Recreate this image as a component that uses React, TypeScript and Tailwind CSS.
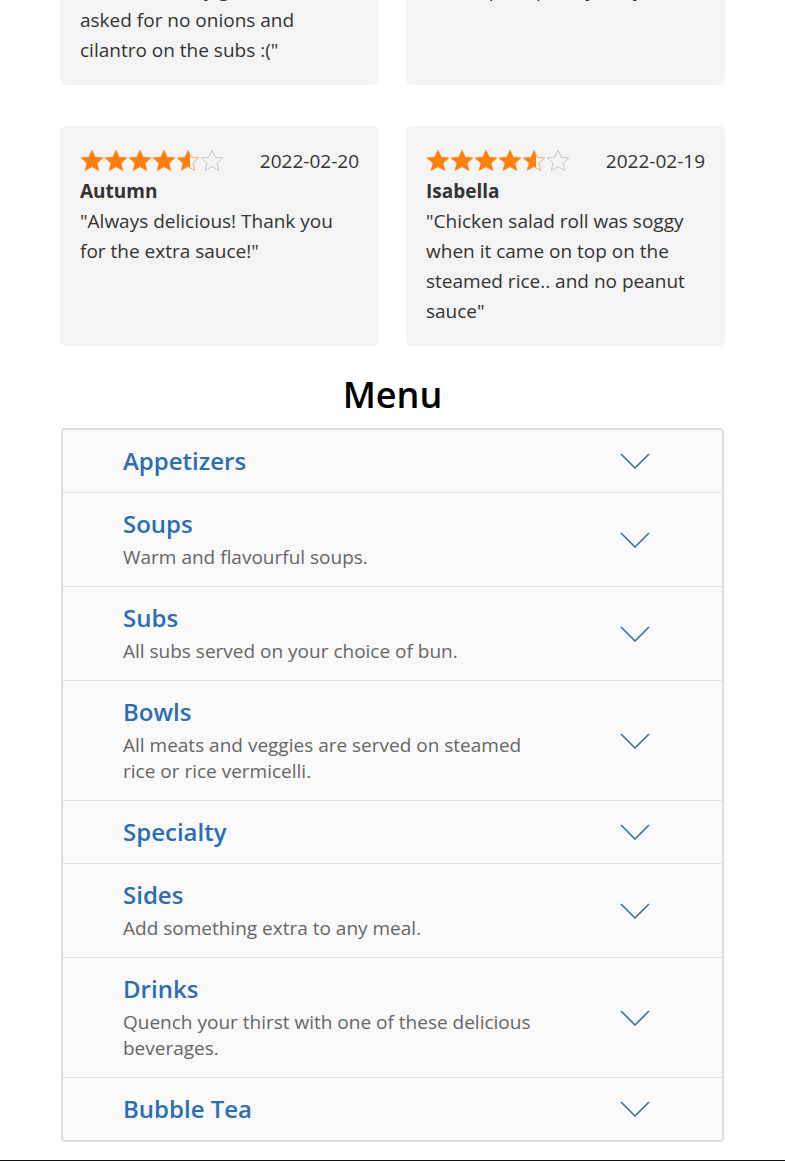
import React from "react";

const font = { fontFamily: '"Open Sans", "Noto Sans", sans-serif' };

function Star({ fill }: { fill: "full" | "half" | "empty" }) {
  const d =
    "M12 1.2l3.2 7 7.6.7-5.8 5.1 1.8 7.5L12 17.6l-6.8 3.9 1.8-7.5-5.8-5.1 7.6-.7z";
  const id = React.useId();
  return (
    <svg width="24" height="24" viewBox="0 0 24 24" className="block">
      {fill === "half" && (
        <defs>
          <linearGradient id={id} x1="0" x2="1" y1="0" y2="0">
            <stop offset="58%" stopColor="#ff7f0e" />
            <stop offset="58%" stopColor="#f4f4f4" />
          </linearGradient>
        </defs>
      )}
      <path
        d={d}
        fill={fill === "full" ? "#ff7f0e" : fill === "half" ? `url(#${id})` : "none"}
        stroke={fill === "empty" ? "#c8c8c8" : fill === "half" ? "#e8a060" : "#ff7f0e"}
        strokeWidth={fill === "empty" ? 1 : 0.8}
        strokeLinejoin="round"
      />
    </svg>
  );
}

function Stars() {
  return (
    <div className="flex items-center">
      <Star fill="full" />
      <Star fill="full" />
      <Star fill="full" />
      <Star fill="full" />
      <Star fill="half" />
      <Star fill="empty" />
    </div>
  );
}

type Review = { name: string; date: string; lines: string[] };

function ReviewCard({ r }: { r: Review }) {
  return (
    <div className="bg-[#f4f4f4] rounded-[6px] p-[20px] text-[#333] text-[19px] leading-[30px]">
      <div className="flex items-center justify-between h-[30px]">
        <Stars />
        <span>{r.date}</span>
      </div>
      <div className="font-bold">{r.name}</div>
      <div>
        {r.lines.map((l, i) => (
          <div key={i}>{l}</div>
        ))}
      </div>
    </div>
  );
}

function Chevron() {
  return (
    <svg width="30" height="16" viewBox="0 0 30 16" className="block">
      <path d="M1 1l14 14L29 1" fill="none" stroke="#3a6ea5" strokeWidth="1.6" />
    </svg>
  );
}

const menu: { title: string; desc?: string }[] = [
  { title: "Appetizers" },
  { title: "Soups", desc: "Warm and flavourful soups." },
  { title: "Subs", desc: "All subs served on your choice of bun." },
  {
    title: "Bowls",
    desc: "All meats and veggies are served on steamed rice or rice vermicelli.",
  },
  { title: "Specialty" },
  { title: "Sides", desc: "Add something extra to any meal." },
  {
    title: "Drinks",
    desc: "Quench your thirst with one of these delicious beverages.",
  },
  { title: "Bubble Tea" },
];

export default function App() {
  const row1: Review[] = [
    {
      name: "Jordan",
      date: "2022-02-21",
      lines: ['"Food was very good but I', "asked for no onions and", 'cilantro on the subs :("'],
    },
    { name: "Kevin", date: "2022-02-21", lines: ['"Quick pickup, very tasty."'] },
  ];
  const row2: Review[] = [
    {
      name: "Autumn",
      date: "2022-02-20",
      lines: ['"Always delicious! Thank you', 'for the extra sauce!"'],
    },
    {
      name: "Isabella",
      date: "2022-02-19",
      lines: [
        '"Chicken salad roll was soggy',
        "when it came on top on the",
        "steamed rice.. and no peanut",
        'sauce"',
      ],
    },
  ];
  return (
    <div className="bg-white min-h-screen overflow-hidden" style={font}>
      <div className="mx-[60px] mt-[-105px]">
        <div className="grid grid-cols-2 gap-x-[27px] gap-y-[41px]">
          {[...row1, ...row2].map((r, i) => (
            <ReviewCard key={i} r={r} />
          ))}
        </div>
        <h2 className="text-center text-[36px] leading-[44px] font-semibold text-black mt-[27px] mb-[11px]">
          Menu
        </h2>
        <div className="border-2 border-[#dedede] rounded-[4px] bg-[#f9f9f9] mx-[1px]">
          {menu.map((m, i) => (
            <div
              key={m.title}
              className={`flex items-center justify-between pl-[60px] pr-[72px] py-[16px] ${
                i > 0 ? "border-t border-[#e2e2e2]" : ""
              }`}
            >
              <div className="w-[420px]">
                <div className="text-[24px] leading-[30px] font-semibold text-[#2d6db3]">
                  {m.title}
                </div>
                {m.desc && (
                  <div className="mt-[5px] text-[19px] leading-[26px] text-[#666]">
                    {m.desc}
                  </div>
                )}
              </div>
              <Chevron />
            </div>
          ))}
        </div>
      </div>
      <div className="mt-[18px] h-[40px] bg-[#111]" />
    </div>
  );
}
